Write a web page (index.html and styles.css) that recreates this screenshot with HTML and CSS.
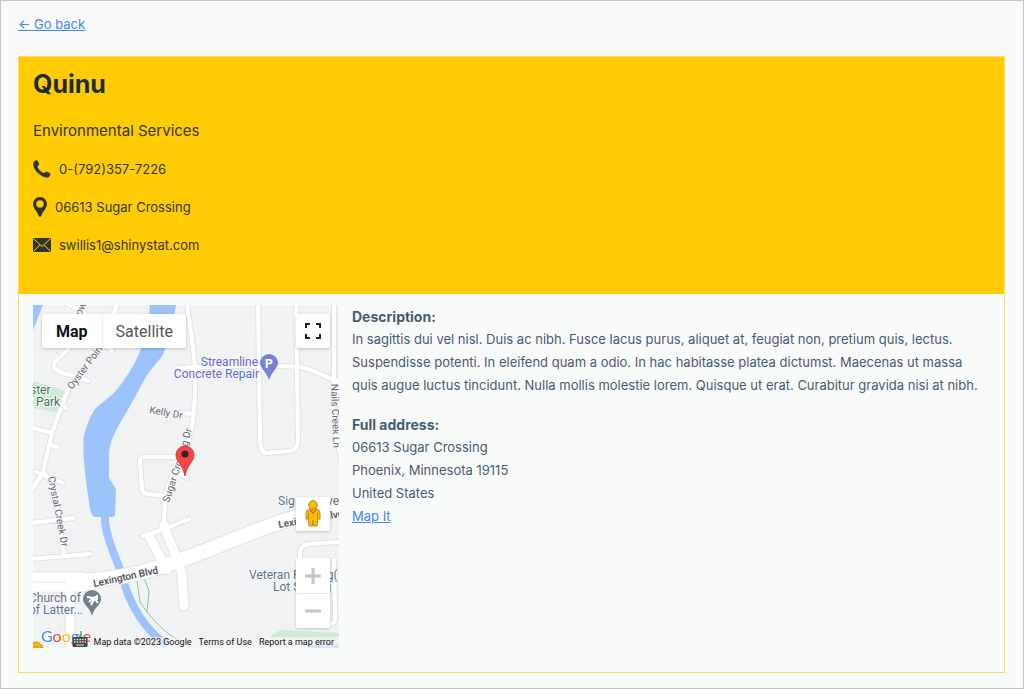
FILE: index.html
```html
<!DOCTYPE html>
<html lang="en">
<head>
<meta charset="utf-8">
<meta name="viewport" content="width=device-width, initial-scale=1">
<title>Quinu</title>
<link rel="stylesheet" href="styles.css">
</head>
<body>
<main class="page">
  <nav><a class="link" href="#">← Go back</a></nav>
  <article class="card">
    <header class="card-header">
      <h1 class="name">Quinu</h1>
      <p class="category">Environmental Services</p>
      <ul class="contacts">
        <li class="contact">
          <svg width="18" height="18" viewBox="0 0 18 18" aria-hidden="true"><path d="M1.200 1.600C2 .7 3 .2 3.800.2c.8.2 2.200 3 2.300 4 .1 1-1.600 1.500-1.500 2.500.3 2.200 4.200 6 6.400 6.400 1 .1 1.600-1.600 2.600-1.500 1 .2 3.800 1.800 4 2.600.1 1-1 2.700-2.400 3.200C9.500 19-.8 9.400.2 3.700.3 2.800.7 2.100 1.200 1.600z"/></svg>
          <span>0-(792)357-7226</span>
        </li>
        <li class="contact">
          <svg width="14" height="20" viewBox="0 0 14 20" aria-hidden="true"><path fill-rule="evenodd" d="M7 0a7 7 0 0 1 7 7c0 4-4.600 8-5.600 11.700Q7 21 5.600 18.700C4.600 15 0 11 0 7a7 7 0 0 1 7-7zm0 3.200a3.700 3.700 0 1 0 0 7.400 3.700 3.700 0 0 0 0-7.400z"/></svg>
          <span>06613 Sugar Crossing</span>
        </li>
        <li class="contact">
          <svg width="18" height="14" viewBox="0 0 18 14" aria-hidden="true"><rect width="18" height="14" rx="1.500"/><path class="fold" d="M1 1l8 7.500L17 1M1 13l5.800-6M17 13l-5.800-6"/></svg>
          <span>swillis1@shinystat.com</span>
        </li>
      </ul>
    </header>
    <div class="card-body">
      <section class="map" aria-label="Map">
        <svg class="map-canvas" viewBox="33 305 306 343" preserveAspectRatio="xMidYMid slice">
          <defs>
            <g id="roads">
              <path d="M118 300L108 333C100 350 78 375 69 388C62 404 58 416 52 433L43 472L30 493M66 303L85 313M82 335L55 362Q52 368 58 371L89 381M101 340L112 351M58 404L66 408M30 427L52 433M51 445L57 447M36 472L63 483M43 472Q52 480 55 495L64 555M30 523L73 518M30 559L90 554"/>
              <path d="M187 300C188 325 195 345 195 375C196 410 192 435 184 452L168 486Q164 500 164 528M177 368C220 366 290 365 300 367C315 370 325 377 339 382M258 300L260 438Q260 454 268 453L290 451Q298 450 298 440L296 300M334 300L334 382Q330 412 341 458M184 457L143 457Q139 458 140 462L142 490Q143 494 149 494L166 496M180 474L187 478M179 413L194 414M143 536L165 529L189 519M300 576L300 552Q301 545 308 544L341 542M334 560L335 618Q335 624 330 624L318 624"/>
            </g>
            <g id="wide">
              <path d="M164 525C168 540 180 560 182 575L184 606"/>
              <path d="M150 538L167 570M70 584V646"/>
              <path d="M30 577H82M30 587H90"/>
            </g>
            <path id="main" d="M75 581Q120 580 160 567C220 549 270 518 342 507"/>
          </defs>
          <rect class="land" x="33" y="305" width="306" height="343"/>
          <path class="green" d="M33 381L69 392L59 413L33 408zM280 630L339 633V640L268 638z"/>
          <path class="water" d="M33 305H43L33 330zM150 305H176C173 325 168 342 163 355C155 365 148 372 142 384L130 406C120 424 109 438 109 455V478L116 489L115 514Q115 517 112 517H95Q90 516 89 502C85 475 82 450 84 436C87 424 91 413 97 407L113 394C126 380 137 360 141 349Q149 325 150 305zM310 646L322 642L339 644V648H310z"/>
          <path class="stream" d="M105 516L105 521C106 541 119 562 123 579C130 606 147 632 166 644"/>
          <path class="trail" d="M137 580L140 602L147 612C156 623 168 636 184 643M144 578L149 591L147 612"/>
          <use href="#roads" class="edge"/><use href="#wide" class="edge-wide"/><use href="#main" class="edge-main"/>
          <use href="#roads" class="road"/><use href="#wide" class="road-wide"/><use href="#main" class="road-main"/>
          <g class="street">
            <text transform="translate(72 390) rotate(-53)">Oyster Point</text>
            <text transform="translate(81 316) rotate(-65)">ow</text>
            <text transform="translate(149 413) rotate(10)">Kelly Dr</text>
            <text transform="translate(169 503) rotate(-72)">Sugar Cros</text>
            <text transform="translate(186 452) rotate(-76)">ng Dr</text>
            <text transform="translate(48 477) rotate(79)">Crystal Creek Dr</text>
            <text transform="translate(331 384) rotate(88)">Nails Creek Ln</text>
            <text class="major" transform="translate(94 587) rotate(-12)">Lexington Blvd</text>
            <text class="major" transform="translate(279 528) rotate(-10)">Lexington Blvd</text>
          </g>
          <g class="place">
            <text class="park" x="30" y="394">ster</text><text class="park" x="29" y="406">t Park</text>
            <text class="shop" text-anchor="end" x="258" y="366">Streamline</text>
            <text class="shop" text-anchor="end" x="259" y="378">Concrete Repair</text>
            <text x="278" y="505">Sig</text><text x="327" y="505">ve</text>
            <text x="249" y="579">Veteran Parking(</text><text x="273" y="591">Lot Storing</text>
            <text x="29" y="602">Church of</text><text x="29" y="614">of Latter...</text>
          </g>
          <path fill="#7684d0" d="M269 354a9 9 0 0 1 9 9c0 5-6 8-9 17-3-9-9-12-9-17a9 9 0 0 1 9-9z"/>
          <text class="pin-letter" x="265" y="368">P</text>
          <path fill="#70818c" d="M92 590a9 9 0 0 1 9 9c0 6-7 8-9 17-2-9-9-11-9-17a9 9 0 0 1 9-9z"/>
          <path fill="none" stroke="#fff" stroke-width="2" d="M87 597l7 1 4 5M91 605l4-8 3-1M89 602l4-4M97 595v5"/>
          <path fill="#f84444" stroke="#d53b3b" stroke-width="1" d="M185 446a9 9 0 0 1 9 9c0 7-7 9-9 21-2-12-9-14-9-21a9 9 0 0 1 9-9z"/>
          <circle cx="185" cy="454" r="3.500" fill="#302525"/>
          <text class="logo" x="41" y="642"><tspan fill="#4285f4">G</tspan><tspan fill="#ea4335">o</tspan><tspan fill="#fbbc04">o</tspan><tspan fill="#4285f4">g</tspan><tspan fill="#34a853">l</tspan><tspan fill="#ea4335">e</tspan></text>
          <path fill="#f5b81b" d="M33 642Q40 639 44 648H33z"/><path stroke="#cf4a24" stroke-width="1" stroke-dasharray="1 2" fill="none" d="M33 643Q40 641 43 648M34 647H41"/>
        </svg>
        <div class="map-types">
          <button class="map-type selected" type="button">Map</button>
          <button class="map-type" type="button">Satellite</button>
        </div>
        <button class="tool fullscreen" type="button" aria-label="Toggle fullscreen view">
          <svg width="16" height="16" viewBox="0 0 16 16"><path fill="none" stroke="#222" stroke-width="2" d="M1 5V1H5M11 1H15V5M15 11V15H11M5 15H1V11"/></svg>
        </button>
        <div class="tools">
          <button class="tool" type="button" aria-label="Street View">
            <svg width="16" height="28" viewBox="0 0 16 28"><path fill="#fbbc04" stroke="#a87a22" stroke-width=".8" d="M4 9Q1 10 1 13V19H3L4 26H7.500L8 20L8.500 26H12L13 19H15V13Q15 10 12 9z"/><circle cx="8" cy="5" r="4.400" fill="#fbbc04" stroke="#a87a22" stroke-width=".8"/><path fill="none" stroke="#e25b22" stroke-width="1.500" d="M5 10L8 13L11 10"/><path fill="none" stroke="#b5822b" d="M3.500 13V18M12.500 13V18"/></svg>
          </button>
          <div class="zoom">
            <button class="tool" type="button" aria-label="Zoom in"><svg width="16" height="16" viewBox="0 0 16 16"><path stroke="#c4c4c4" stroke-width="3" d="M0 8H16M8 0V16"/></svg></button>
            <button class="tool" type="button" aria-label="Zoom out"><svg width="16" height="16" viewBox="0 0 16 16"><path stroke="#c4c4c4" stroke-width="3" d="M0 8H16"/></svg></button>
          </div>
        </div>
        <footer class="attribution">
          <button class="keys" type="button" aria-label="Keyboard shortcuts"><svg width="16" height="13" viewBox="0 0 16 13"><path stroke="#34a853" stroke-width="1.500" d="M8 0V2"/><rect x=".5" y="2" width="15" height="10" rx="1" fill="#444"/><path stroke="#eee" stroke-width="1.300" stroke-dasharray="1.500 1.200" d="M2 4.500H14M2 7H14"/><path stroke="#eee" d="M4 10H12"/></svg></button>
          <span class="terms">
            <span>Map data ©2023 Google</span>
            <a href="#">Terms of Use</a>
            <a href="#">Report a map error</a>
          </span>
        </footer>
      </section>
      <div class="details">
        <section>
          <h2 class="label">Description:</h2>
          <p>In sagittis dui vel nisl. Duis ac nibh. Fusce lacus purus, aliquet at, feugiat non, pretium quis, lectus. Suspendisse potenti. In eleifend quam a odio. In hac habitasse platea dictumst. Maecenas ut massa quis augue luctus tincidunt. Nulla mollis molestie lorem. Quisque ut erat. Curabitur gravida nisi at nibh.</p>
        </section>
        <section>
          <h2 class="label">Full address:</h2>
          <address>06613 Sugar Crossing<br>Phoenix, Minnesota 19115<br>United States</address>
          <a class="link" href="#">Map It</a>
        </section>
      </div>
    </div>
  </article>
</main>
</body>
</html>
```
FILE: styles.css
```css
* { box-sizing: border-box; }
body { margin: 0; background: #f9fbfb; color: #475c70; font: 13px/23px Inter, "Liberation Sans", sans-serif; }
h1, h2, p, ul { margin: 0; padding: 0; }
button { border: 0; padding: 0; background: none; font: inherit; cursor: pointer; }
svg { display: block; }
.page { min-height: 100vh; padding: 12px 18px 15px 17px; border: 1px solid #c4c4c4; display: flex; flex-direction: column; gap: 20px; }
.link { color: #4285f4; text-decoration: underline; }
.card { flex: 1; border: 1px solid #ffdc55; }
.card-header { background: #ffcb05; color: #343827; padding: 10px 14px 36px; }
.name { color: #1c2b33; font-size: 25px; line-height: 34px; font-weight: 700; }
.category { margin-top: 18px; font-size: 15px; line-height: 24px; }
.contacts { list-style: none; margin-top: 13px; display: grid; gap: 12px; }
.contact { display: flex; align-items: center; gap: 8px; line-height: 26px; }
.contact svg { fill: #30342d; flex: none; }
.contact .fold { fill: none; stroke: #ffcb05; stroke-width: 1; }
.card-body { display: flex; align-items: flex-start; gap: 13px; padding: 11px 14px 20px; }
.details { flex: 1; padding-right: 8px; display: flex; flex-direction: column; gap: 16px; }
.label { font-size: 14px; font-weight: 700; line-height: 23px; }
address { font-style: normal; }

.map { position: relative; flex: 0 0 306px; overflow: hidden; font-family: Roboto, sans-serif; }
.map-canvas { width: 100%; height: auto; }
.land { fill: #f0f2f4; }
.green { fill: #d0ead7; }
.water { fill: #9dc3fb; }
.stream { fill: none; stroke: #9dc3fb; stroke-width: 8; }
.trail { fill: none; stroke: #8ac79b; stroke-width: 1; }
.edge, .edge-wide, .edge-main { fill: none; stroke: #dfe3e7; stroke-linecap: round; stroke-linejoin: round; }
.road, .road-wide, .road-main { fill: none; stroke: #fff; stroke-linecap: round; stroke-linejoin: round; }
.edge { stroke-width: 6; }
.road { stroke-width: 4; }
.edge-wide { stroke-width: 11; }
.road-wide { stroke-width: 9; }
.edge-main { stroke-width: 16; }
.road-main { stroke-width: 14; }
.street text { font-size: 10px; fill: #5f666c; paint-order: stroke; stroke: #f8f9fa; stroke-width: 2px; }
.street .major { font-weight: 500; fill: #454b50; }
.place text { font-size: 12px; fill: #607387; paint-order: stroke; stroke: #f8f9fa; stroke-width: 2px; }
.place .shop { fill: #5b6bc8; }
.place .park { fill: #38784d; }
.pin-letter { font-size: 12px; font-weight: 700; fill: #fff; }
.logo { font: 16px Lato, sans-serif; paint-order: stroke; stroke: #fff; stroke-width: 2px; }

.map-types { position: absolute; top: 9px; left: 9px; display: flex; background: #fff; box-shadow: 0 1px 3px #0003; border-radius: 2px; }
.map-type { height: 34px; padding: 0 14px; font-size: 16px; color: #565656; }
.map-type + .map-type { padding: 0 13px; border-left: 1px solid #eee; }
.map-type.selected { color: #111; font-weight: 700; }
.tool { width: 34px; height: 34px; display: grid; place-items: center; background: #fff; box-shadow: 0 1px 3px #0003; border-radius: 2px; }
.fullscreen { position: absolute; top: 9px; right: 9px; }
.tools { position: absolute; right: 9px; bottom: 20px; display: grid; gap: 27px; }
.zoom { background: #fff; box-shadow: 0 1px 3px #0003; border-radius: 2px; }
.zoom .tool { height: 35px; box-shadow: none; }
.zoom .tool + .tool { border-top: 1px solid #e6e6e6; }
.attribution { position: absolute; right: 0; bottom: 0; display: flex; align-items: flex-end; gap: 4px; }
.terms { display: flex; gap: 7px; padding: 0 5px 0 2px; background: #f5f5f5b0; color: #111; font-size: 9px; line-height: 11px; white-space: nowrap; }
.attribution a { color: inherit; text-decoration: none; }
.keys { height: 13px; }
```
